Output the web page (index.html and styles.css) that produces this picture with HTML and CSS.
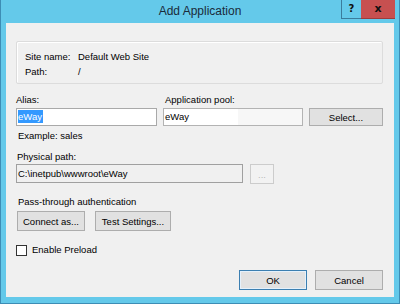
FILE: index.html
```
<!DOCTYPE html>
<html lang="en">
<head>
  <meta charset="UTF-8">
  <title>Add Application</title>
  <link rel="stylesheet" href="styles.css">
</head>
<body>
  <div class="window">
    <div class="titlebar">
      <div></div>
      <div class="title">Add Application</div>
      <div class="caption-btns">
        <span class="cap-btn help">?</span>
        <span class="cap-btn close">x</span>
      </div>
    </div>

    <div class="client">
      <div class="groupbox">
        <div class="info-row"><span class="info-label">Site name:</span><span>Default Web Site</span></div>
        <div class="info-row"><span class="info-label">Path:</span><span>/</span></div>
      </div>

      <div class="alias-grid">
        <div class="label">Alias:</div>
        <div class="label">Application pool:</div>
        <div></div>
        <div class="field"><span class="selected">eWay</span></div>
        <div class="field pool"><span class="pool-text">eWay</span></div>
        <button class="btn">Select...</button>
      </div>
      <div class="hint">Example: sales</div>

      <div class="label path-label">Physical path:</div>
      <div class="path-row">
        <div class="field path-field">C:\inetpub\wwwroot\eWay</div>
        <button class="btn browse" disabled>...</button>
      </div>

      <div class="label auth-label">Pass-through authentication</div>
      <div class="btn-row">
        <button class="btn connect">Connect as...</button>
        <button class="btn test">Test Settings...</button>
      </div>

      <label class="check-row"><span class="checkbox"></span>Enable Preload</label>

      <div class="footer-btns">
        <button class="btn dlg default">OK</button>
        <button class="btn dlg">Cancel</button>
      </div>
    </div>
  </div>
</body>
</html>
```

FILE: styles.css
```
:root {
  --frame-color: #64c9ea;
  --frame-edge: #3d8db5;
  --client-bg: #f0f0f0;
  --field-border: #a9a9a9;
  --btn-border: #adadad;
  --text-color: #000000;
}

* {
  margin: 0;
  padding: 0;
  box-sizing: border-box;
}

body {
  width: 400px;
  height: 304px;
  overflow: hidden;
  font-family: 'Liberation Sans', Arial, sans-serif;
  font-size: 9.5px;
  color: var(--text-color);
}

.window {
  width: 400px;
  height: 304px;
  background-color: var(--frame-color);
  border: 1px solid var(--frame-edge);
  border-top: none;
  padding: 0 5px 6px 5px;
  display: flex;
  flex-direction: column;
}

.titlebar {
  height: 23px;
  display: grid;
  grid-template-columns: 1fr auto 1fr;
  align-items: start;
}

.title {
  font-size: 12px;
  color: #1a2b3a;
  line-height: 23px;
}

.caption-btns {
  display: flex;
  justify-content: flex-end;
  margin-right: -1px;
}

.cap-btn {
  height: 19px;
  line-height: 18px;
  text-align: center;
  font-weight: bold;
  font-family: 'DejaVu Sans', sans-serif;
  font-size: 10px;
  color: #101010;
}

.help {
  width: 20px;
  border: 1px solid #3b7c9c;
  border-top: none;
  border-right: none;
}

.close {
  width: 34px;
  background-color: #c75050;
  border-bottom: 1px solid #9e3c3c;
  font-size: 11px;
}

.client {
  flex: 1;
  background-color: var(--client-bg);
  padding: 18px 11px 0 10px;
}

.groupbox {
  height: 43px;
  border: 1px solid #dcdcdc;
  box-shadow: inset 1px 1px 0 #ffffff;
  border-radius: 2px;
  padding: 8px 0 0 8px;
}

.info-row {
  display: flex;
  height: 15px;
  line-height: 13px;
}

.info-label {
  width: 53px;
}

.label {
  line-height: 12px;
}

.alias-grid {
  display: grid;
  grid-template-columns: 141px 140px 74px;
  column-gap: 6px;
  row-gap: 2px;
  margin-top: 10px;
}

.alias-grid .label:nth-child(2) {
  margin-left: 2px;
}

.field {
  height: 18px;
  background-color: #ffffff;
  border: 1px solid var(--field-border);
  padding: 0 1px;
  line-height: 16px;
  white-space: nowrap;
  overflow: hidden;
}

.selected {
  display: inline-block;
  background-color: #3399ff;
  color: #ffffff;
  line-height: 13px;
  padding-right: 1px;
}

.pool {
  background-color: #f7f7f7;
  border-color: #b3b3b3;
  padding: 0;
}

.pool-text {
  display: inline-block;
  width: 74px;
  height: 16px;
  background-color: #ffffff;
  padding-left: 1px;
}

.btn {
  font-family: inherit;
  font-size: 9.5px;
  color: var(--text-color);
  background-color: #e1e1e1;
  border: 1px solid var(--btn-border);
  height: 18px;
  border-radius: 0;
}

.hint {
  line-height: 12px;
  margin-top: 4px;
  margin-left: 2px;
}

.path-label {
  margin-top: 9px;
  margin-left: 1px;
}

.path-row {
  display: flex;
  gap: 7px;
  margin-top: 1px;
}

.path-field {
  width: 227px;
  height: 19px;
  line-height: 17px;
  background-color: #f0f0f0;
  border-color: #a0a0a0;
}

.browse {
  width: 24px;
  height: 20px;
  color: #b8b8b8;
  background-color: #f2f2f2;
  border-color: #cccccc;
}

.auth-label {
  margin-top: 12px;
  margin-left: 2px;
}

.btn-row {
  display: flex;
  gap: 10px;
  margin-top: 3px;
  margin-left: 1px;
}

.connect {
  width: 68px;
  height: 20px;
}

.test {
  width: 76px;
  height: 20px;
}

.check-row {
  display: flex;
  align-items: center;
  gap: 5px;
  margin-top: 13px;
  line-height: 12px;
}

.checkbox {
  width: 11px;
  height: 11px;
  background-color: #ffffff;
  border: 1px solid #333333;
}

.footer-btns {
  display: flex;
  justify-content: flex-end;
  gap: 8px;
  margin-top: 14px;
}

.dlg {
  width: 68px;
  height: 20px;
}

.default {
  border-color: #3c7fb1;
  box-shadow: inset 0 0 0 1px #e5f1fb;
}
```
